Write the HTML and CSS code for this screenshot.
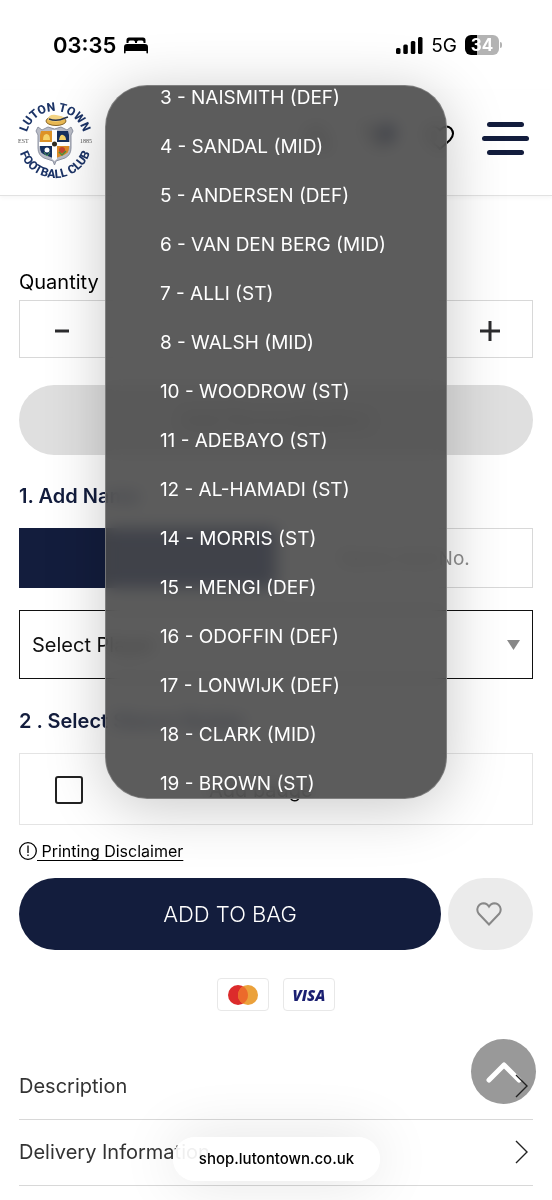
FILE: index.html
```html
<!DOCTYPE html>
<html lang="en">
<head>
<meta charset="utf-8">
<meta name="viewport" content="width=device-width, initial-scale=1">
<title>Luton Town Shop</title>
<link rel="stylesheet" href="styles.css">
</head>
<body>
<div class="page">
  <div class="status">
    <div class="status-left">
      <span class="time">03:35</span>
      <svg width="24" height="17" viewBox="0 0 24 17" aria-hidden="true"><path d="M2.500 6V3Q2.500 .5 5 .5H19Q21.500 .5 21.500 3V6H19.500V5Q19.500 3.500 18 3.500H14.500Q13 3.500 13 5V6H11V5Q11 3.500 9.500 3.500H6Q4.500 3.500 4.500 5V6ZM0 10Q0 7 3 7H21Q24 7 24 10V15.500Q24 16.500 23.200 16.500T22.400 15.500V14H1.600V15.500Q1.600 16.500 .8 16.500T0 15.500Z"/></svg>
    </div>
    <div class="status-right">
      <svg width="27" height="17" viewBox="0 0 27 17" aria-hidden="true"><rect x="0" y="11" width="4.500" height="6" rx="1.500"/><rect x="7.300" y="7.500" width="4.500" height="9.500" rx="1.500"/><rect x="14.800" y="4" width="4.500" height="13" rx="1.500"/><rect x="22" y="0" width="4.500" height="17" rx="1.500"/></svg>
      <span class="network">5G</span>
      <span class="battery"><span class="battery-body">34</span><span class="battery-tip"></span></span>
    </div>
  </div>

  <header class="header">
    <a class="logo" href="#" aria-label="Luton Town Football Club">
      <svg width="74" height="84" viewBox="0 -4 74 84">
        <defs>
          <path id="arc-top" d="M8 38A29 29 0 0 1 66 38"/>
          <path id="arc-bottom" d="M0 39A37 37 0 0 0 74 39"/>
        </defs>
        <text class="logo-name"><textPath href="#arc-top" startOffset="50%" text-anchor="middle">LUTON TOWN</textPath></text>
        <text class="logo-name"><textPath href="#arc-bottom" startOffset="50%" text-anchor="middle">FOOTBALL CLUB</textPath></text>
        <text class="logo-year" x="0" y="41">EST</text>
        <text class="logo-year" x="62" y="41">1885</text>
        <path d="M20 25L24 28L30 25L36.500 27L43 25L49 28L53 25L55 29L53 33V46Q53 53 47 56L38 59L36.500 63L35 59L26 56Q20 53 20 46V33L18 29Z" fill="#b9bcc6" stroke="#8f94a3"/>
        <path d="M23 29H35V40H22V33Z" fill="#dd9227"/>
        <path d="M38 29H50L51 33V40H38Z" fill="#16305f"/>
        <path d="M22 43H35V56L27 53Q22 51 22 46Z" fill="#16305f"/>
        <path d="M38 43H51V46Q51 51 46 53L38 56Z" fill="#dd8b27"/>
        <path d="M34 28H39V40H52V44H39V57L36.500 59L34 57V44H21V40H34Z" fill="#fff"/>
        <circle cx="36.500" cy="42" r="2.500" fill="#302c22"/>
        <path d="M25 38Q25 32 28.500 32T32 38ZM41 38Q42 32 45 33T48 38Z" fill="#f5d36b"/>
        <circle cx="29" cy="48" r="2.500" fill="#fff"/><path d="M26 50L29 54L32 50" stroke="#4e9c58" fill="none"/>
        <circle cx="44" cy="48" r="3" fill="#c5442f"/><path d="M41 50L44 53L48 49" stroke="#4e8a3d" fill="none" stroke-width="1.500"/>
        <ellipse cx="38" cy="19" rx="10" ry="4.500" fill="#e9b953" stroke="#896527"/>
        <path d="M30 18Q30 12 38 13T47 17Q39 22 30 18Z" fill="#f4d484"/>
        <path d="M31 17Q39 20 47 16L50 15" stroke="#28344d" stroke-width="1.600" fill="none"/>
      </svg>
    </a>
    <nav class="tools" aria-label="Shop">
      <button class="tool" aria-label="Search"><svg width="30" height="30" viewBox="0 0 30 30"><circle cx="13" cy="13" r="9"/><path d="M20 20L27 27"/></svg></button>
      <button class="tool" aria-label="Bag"><svg width="38" height="34" viewBox="0 0 38 34"><path d="M2 4H8L13 22H28L32 9H10"/><circle class="dot" cx="27" cy="11" r="9"/></svg></button>
      <button class="tool" aria-label="Wish list"><svg width="30" height="30" viewBox="0 0 30 30"><path d="M15 25L5 16Q1 11 4 5.500Q9 0 15 6Q21 0 26 4.500Q30.500 10 25 16Z"/></svg></button>
      <button class="menu" aria-label="Menu"><span class="bar short"></span><span class="bar"></span><span class="bar short"></span></button>
    </nav>
  </header>

  <main class="main">
    <label class="qty-label" for="qty">Quantity</label>
    <div class="stepper">
      <button class="step" aria-label="Decrease"><svg width="14" height="20" viewBox="0 0 14 20"><path d="M0 10H14"/></svg></button>
      <input class="qty" id="qty" type="text">
      <button class="step" aria-label="Increase"><svg width="20" height="20" viewBox="0 0 20 20"><path d="M0 10H20M10 0V20"/></svg></button>
    </div>
    <button class="personalise" disabled>Add Personalisation</button>

    <h2 class="heading">1. Add Name</h2>
    <div class="tabs">
      <button class="tab active" aria-label="Player"></button>
      <button class="tab">Name And No.</button>
    </div>
    <div class="select-wrap">
      <select class="select" aria-label="Player"><option>Select Player</option></select>
      <svg class="caret" width="13" height="10" viewBox="0 0 13 10" aria-hidden="true"><path d="M0 0H13L6.500 10Z"/></svg>
    </div>

    <h2 class="heading second">2 . Select Sleeve Badge</h2>
    <label class="option"><input class="check" type="checkbox"><span>Add badge</span></label>
    <a class="disclaimer" href="#"><svg width="18" height="18" viewBox="0 0 18 18" aria-hidden="true"><circle cx="9" cy="9" r="8.300"/><path d="M9 3.500V11M9 12.500V14"/></svg><span class="disclaimer-text">&nbsp;Printing Disclaimer</span></a>

    <div class="actions">
      <button class="add">ADD TO BAG</button>
      <button class="wish" aria-label="Add to wish list"><svg width="26" height="24" viewBox="0 0 26 24"><path d="M13 22.500L2.800 11.800Q.3 8.500 2 4.800Q4 1.200 7.700 1.200Q11 1.300 13 4.600Q15 1.300 18.300 1.200Q22 1.200 24 4.800Q25.700 8.500 23.200 11.800Z"/></svg></button>
    </div>
    <div class="cards">
      <span class="card"><svg width="30" height="20" viewBox="0 0 30 20" role="img" aria-label="Mastercard"><circle cx="10" cy="10" r="10" fill="#dc2b2b"/><circle cx="20" cy="10" r="10" fill="#eba13b"/><path d="M15 1.340A10 10 0 0 1 15 18.660A10 10 0 0 1 15 1.340Z" fill="#ec6a2b"/></svg></span>
      <span class="card visa">VISA</span>
    </div>
    <div class="accordion">
      <button class="row">Description<svg width="13" height="24" viewBox="0 0 13 24" aria-hidden="true"><path d="M1 1L12 12L1 23"/></svg></button>
      <button class="row">Delivery Information<svg width="13" height="24" viewBox="0 0 13 24" aria-hidden="true"><path d="M1 1L12 12L1 23"/></svg></button>
    </div>
  </main>

  <a class="to-top" href="#" aria-label="Back to top"><svg width="36" height="22" viewBox="0 0 36 22"><path d="M3 19L18 4L33 19"/></svg></a>

  <div class="popup">
    <ul class="players" role="listbox" aria-label="Players">
      <li class="player" role="option">3 - NAISMITH (DEF)</li>
      <li class="player" role="option">4 - SANDAL (MID)</li>
      <li class="player" role="option">5 - ANDERSEN (DEF)</li>
      <li class="player" role="option">6 - VAN DEN BERG (MID)</li>
      <li class="player" role="option">7 - ALLI (ST)</li>
      <li class="player" role="option">8 - WALSH (MID)</li>
      <li class="player" role="option">10 - WOODROW (ST)</li>
      <li class="player" role="option">11 - ADEBAYO (ST)</li>
      <li class="player" role="option">12 - AL-HAMADI (ST)</li>
      <li class="player" role="option">14 - MORRIS (ST)</li>
      <li class="player" role="option">15 - MENGI (DEF)</li>
      <li class="player" role="option">16 - ODOFFIN (DEF)</li>
      <li class="player" role="option">17 - LONWIJK (DEF)</li>
      <li class="player" role="option">18 - CLARK (MID)</li>
      <li class="player" role="option">19 - BROWN (ST)</li>
    </ul>
  </div>

  <div class="address">shop.lutontown.co.uk</div>
</div>
</body>
</html>
```
FILE: styles.css
```css
* { box-sizing: border-box; }
body { margin: 0; background: #fff; color: #111; font-family: Inter, "Liberation Sans", sans-serif; font-size: 20px; }
button, input, select { font: inherit; color: inherit; margin: 0; }
button { background: none; border: 0; padding: 0; cursor: pointer; }
svg { display: block; flex: none; }
.page { position: relative; min-height: 100vh; overflow: hidden; }

.status { display: flex; justify-content: space-between; align-items: center; height: 90px; padding: 0 50px 0 53px; color: #000; }
.status-left, .status-right { display: flex; align-items: center; gap: 8px; }
.time { font-size: 22px; font-weight: 600; }
.network { font-size: 19px; }
.battery { display: flex; align-items: center; gap: 1px; }
.battery-body { width: 34px; height: 20px; border-radius: 6px; background: linear-gradient(90deg, #000 34%, #b3b3b3 34%); color: #fff; font-size: 17px; font-weight: 700; line-height: 20px; text-align: center; }
.battery-tip { width: 2px; height: 6px; border-radius: 0 2px 2px 0; background: #b3b3b3; }

.header { display: flex; align-items: center; justify-content: space-between; height: 106px; padding: 0 23px 8px 18px; border-bottom: 1px solid #e2e2e2; box-shadow: 0 2px 4px rgba(0, 0, 0, .04); }
.logo { padding-top: 2px; }
.logo-name { font-family: Roboto, "Liberation Sans", sans-serif; font-size: 12px; font-weight: 800; fill: #1c3467; }
.logo-year { font-family: "Liberation Serif", serif; font-size: 6px; fill: #555; }
.tools { display: flex; align-items: center; gap: 27px; }
.tool svg { fill: none; stroke: #000; stroke-width: 2; }
.tool .dot { fill: #131d3d; stroke: none; }
.menu { display: flex; flex-direction: column; align-items: center; gap: 9px; width: 47px; }
.bar { width: 47px; height: 5px; border-radius: 3px; background: #131d3d; }
.short { width: 37px; }

.main { position: relative; z-index: 1; display: flex; flex-direction: column; padding: 72px 19px 0; }
.qty-label { height: 32px; line-height: 28px; color: #000; }
.stepper { display: flex; height: 58px; border: 1px solid #d8d8d8; }
.step { display: flex; align-items: center; justify-content: center; flex: 0 0 84px; padding-top: 4px; }
.step svg { stroke: #2c2c2e; stroke-width: 3; fill: none; }
.qty { flex: 1; min-width: 0; border: 0; text-align: center; background: none; }
.personalise { height: 70px; margin-top: 27px; border-radius: 35px; background: #dfdfdf; color: #777; }
.heading { margin: 28px 0 18px; font-size: 20px; font-weight: 600; line-height: 27px; color: #131d3d; }
.tabs { display: flex; height: 60px; }
.tab { flex: 1; border: 1px solid #d8d8d8; color: #8e8e8e; font-size: 19px; }
.active { background: #131d3d; border-color: #131d3d; color: #fff; }
.select-wrap { display: grid; align-items: center; margin-top: 22px; }
.select, .caret { grid-area: 1 / 1; }
.select { width: 100%; height: 69px; padding: 0 12px; border: 1px solid #111; border-radius: 0; background: none; appearance: none; color: #111; }
.caret { justify-self: end; margin-right: 13px; fill: #888; pointer-events: none; }
.second { margin-top: 29px; }
.option { display: flex; align-items: center; gap: 126px; height: 72px; padding: 2px 0 0 35px; border: 1px solid #e4e4e4; }
.check { appearance: none; width: 28px; height: 28px; border: 2px solid #222; border-radius: 3px; background: #fff; }
.disclaimer { display: flex; align-items: center; align-self: flex-start; height: 26px; margin-top: 13px; font-size: 16px; color: #000; text-decoration: none; }
.disclaimer-text { text-decoration: underline; text-underline-offset: 3px; }
.disclaimer svg { fill: none; stroke: #000; stroke-width: 1.3; }
.actions { display: flex; gap: 7px; margin-top: 14px; }
.add { flex: 1; height: 72px; border-radius: 36px; background: #131d3d; color: #fff; font-size: 22px; font-weight: 300; }
.wish { display: flex; align-items: center; justify-content: center; width: 85px; height: 72px; padding-right: 4px; border-radius: 36px; background: #ebebeb; }
.wish svg { fill: none; stroke: #888; stroke-width: 2; }
.cards { display: flex; justify-content: center; gap: 14px; margin-top: 28px; }
.card { display: flex; align-items: center; justify-content: center; width: 52px; height: 33px; border: 1px solid #e8e8e8; border-radius: 4px; }
.visa { color: #1a1f71; font-family: "Open Sans", sans-serif; font-size: 15px; font-weight: 800; font-style: italic; }
.accordion { margin-top: 43px; }
.row { display: flex; align-items: center; justify-content: space-between; width: 100%; height: 66px; padding: 0 5px 2px 0; border-bottom: 1px solid #d8d8d8; color: #333; }
.row svg { fill: none; stroke: #222; stroke-width: 1.4; }

.to-top { position: absolute; right: 16px; bottom: 96px; display: flex; align-items: center; justify-content: center; width: 65px; height: 65px; border-radius: 50%; background: #999; }
.to-top svg { fill: none; stroke: #fff; stroke-width: 5; stroke-linecap: round; stroke-linejoin: round; }

.popup { position: absolute; z-index: 2; top: 85px; left: 19%; right: 19%; height: 714px; overflow: hidden; border: 1px solid rgba(150, 150, 150, .6); border-radius: 42px; background: rgba(71, 71, 71, .885); backdrop-filter: blur(8px) saturate(2); box-shadow: 0 8px 60px rgba(0, 0, 0, .22); }
.players { margin: -13px 0 0; padding: 0 0 0 54px; list-style: none; }
.player { height: 49px; line-height: 49px; font-size: 19px; color: #fff; white-space: nowrap; }

.address { position: absolute; z-index: 3; bottom: 19px; left: 50%; width: 207px; height: 44px; margin-left: -103px; border-radius: 22px; background: rgba(255, 255, 255, .92); box-shadow: 0 0 60px rgba(0, 0, 0, .12); color: #000; font-size: 15px; font-weight: 500; line-height: 44px; text-align: center; }
```
